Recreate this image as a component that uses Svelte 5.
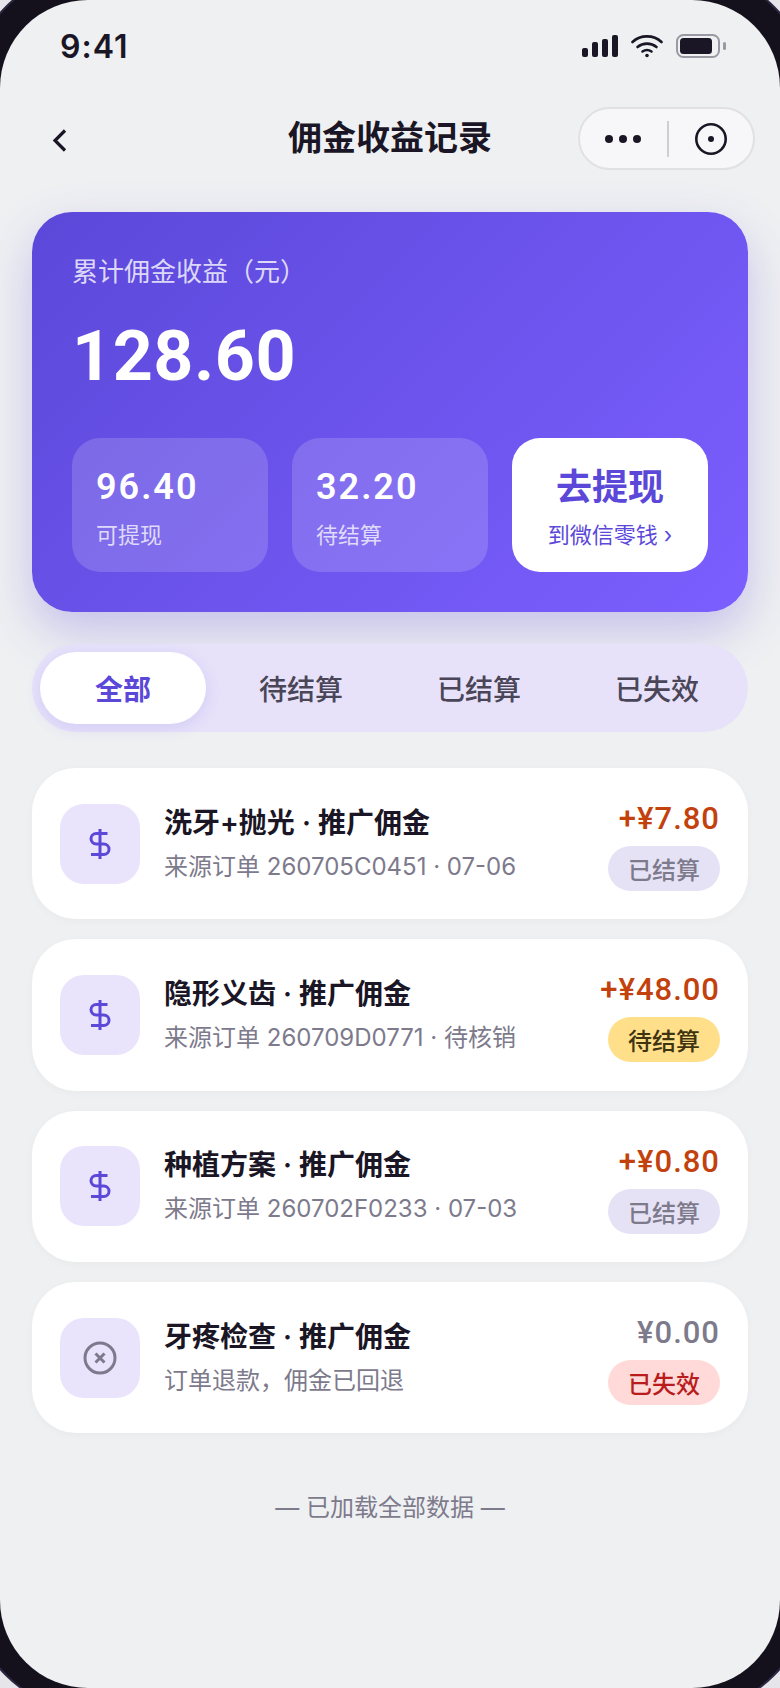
<script>
  const rows = [
    { title: '洗牙+抛光 · 推广佣金', sub: '来源订单 260705C0451 · 07-06', amount: '+¥7.80', status: '已结算', tone: 'done', icon: 'dollar' },
    { title: '隐形义齿 · 推广佣金', sub: '来源订单 260709D0771 · 待核销', amount: '+¥48.00', status: '待结算', tone: 'wait', icon: 'dollar' },
    { title: '种植方案 · 推广佣金', sub: '来源订单 260702F0233 · 07-03', amount: '+¥0.80', status: '已结算', tone: 'done', icon: 'dollar' },
    { title: '牙疼检查 · 推广佣金', sub: '订单退款，佣金已回退', amount: '¥0.00', status: '已失效', tone: 'lost', icon: 'x' }
  ];
  const tabs = ['全部', '待结算', '已结算', '已失效'];
</script>

<div class="frame">
  <div class="bezel"></div>
  <div class="screen">
    <div class="statusbar">
      <span class="time">9:41</span>
      <div class="status-icons">
        <svg width="36" height="22" viewBox="0 0 36 22">
          <rect x="0" y="13" width="6" height="9" rx="2" fill="#1a1625"/>
          <rect x="10" y="7" width="6" height="15" rx="2" fill="#1a1625"/>
          <rect x="20" y="4" width="6" height="18" rx="2" fill="#1a1625"/>
          <rect x="30" y="0" width="6" height="22" rx="2" fill="#1a1625"/>
        </svg>
        <svg width="32" height="24" viewBox="0 0 32 24" fill="none" stroke="#1a1625" stroke-width="2.6" stroke-linecap="round">
          <path d="M1.500 8C9.500 0.500 22.500 0.500 30.500 8"/>
          <path d="M6.500 13C12 8.500 20 8.500 25.500 13"/>
          <path d="M11.500 17.500C14.500 15.500 17.500 15.500 20.500 17.500"/>
          <circle cx="16" cy="21.500" r="1.800" fill="#1a1625" stroke="none"/>
        </svg>
        <svg width="50" height="24" viewBox="0 0 50 24">
          <rect x="1" y="1" width="42" height="22" rx="6.500" fill="none" stroke="#9a99a3" stroke-width="2"/>
          <rect x="4" y="4" width="32" height="16" rx="3.500" fill="#1a1625"/>
          <rect x="47" y="8" width="3" height="8" rx="1.500" fill="#9a99a3"/>
        </svg>
      </div>
    </div>

    <div class="navbar">
      <svg class="back" width="15" height="23" viewBox="0 0 15 23" fill="none" stroke="#1a1625" stroke-width="3.200">
        <path d="M13 1.500L3 11.500L13 21.500"/>
      </svg>
      <h1>佣金收益记录</h1>
      <div class="capsule">
        <div class="dots"><i></i><i></i><i></i></div>
        <span class="cap-line"></span>
        <svg width="32" height="32" viewBox="0 0 32 32">
          <circle cx="16" cy="16" r="14.700" fill="none" stroke="#1a1625" stroke-width="2.600"/>
          <circle cx="16" cy="16" r="3" fill="#1a1625"/>
        </svg>
      </div>
    </div>

    <section class="hero">
      <div class="hero-label">累计佣金收益（元）</div>
      <div class="hero-total">128.60</div>
      <div class="hero-cells">
        <div class="cell">
          <strong>96.40</strong>
          <span>可提现</span>
        </div>
        <div class="cell">
          <strong>32.20</strong>
          <span>待结算</span>
        </div>
        <div class="withdraw">
          <strong>去提现</strong>
          <span>到微信零钱 ›</span>
        </div>
      </div>
    </section>

    <div class="tabs">
      {#each tabs as tab, i}
        <div class="tab" class:active={i === 0}>{tab}</div>
      {/each}
    </div>

    <div class="list">
      {#each rows as row}
        <div class="row">
          <div class="row-icon">
            {#if row.icon === 'dollar'}
              <svg width="36" height="36" viewBox="0 0 24 24" fill="none" stroke="#5b48d9" stroke-width="2">
                <path d="M12 2V22"/>
                <path d="M17 5H9.500a3.500 3.500 0 0 0 0 7h5a3.500 3.500 0 0 1 0 7H6"/>
              </svg>
            {:else}
              <svg width="36" height="36" viewBox="0 0 24 24" fill="none" stroke="#7d7a8c" stroke-width="2">
                <circle cx="12" cy="12" r="10"/>
                <path d="M15 9L9 15M9 9L15 15"/>
              </svg>
            {/if}
          </div>
          <div class="row-main">
            <div class="row-title">{row.title}</div>
            <div class="row-sub">{row.sub}</div>
          </div>
          <div class="row-side">
            <div class="amount" class:void={row.tone === 'lost'}>{row.amount}</div>
            <div class="badge {row.tone}">{row.status}</div>
          </div>
        </div>
      {/each}
    </div>

    <div class="foot">— 已加载全部数据 —</div>
  </div>
</div>

<style>
  :global(body) {
    margin: 0;
    background: #e6e6ea;
  }

  .frame {
    position: relative;
    width: 780px;
    height: 1688px;
    overflow: hidden;
    font-family: Inter, "Noto Sans CJK SC", sans-serif;
    color: #1a1625;
  }

  .bezel {
    position: absolute;
    inset: -30px -30px -24px;
    background: #14111d;
    border: 2px solid #2c2843;
    border-radius: 122px;
  }

  .screen {
    position: relative;
    height: 1688px;
    box-sizing: border-box;
    padding: 0 32px;
    background: #eff0f2;
    border-radius: 88px;
    overflow: hidden;
  }

  .statusbar {
    height: 92px;
    padding: 0 22px 0 28px;
    display: flex;
    align-items: center;
    justify-content: space-between;
  }

  .time {
    font-size: 32px;
    font-weight: 600;
    letter-spacing: 1px;
  }

  .status-icons {
    display: flex;
    align-items: center;
    gap: 13px;
  }

  .navbar {
    height: 92px;
    display: flex;
    align-items: center;
    justify-content: center;
    position: relative;
  }

  .back {
    position: absolute;
    left: 20px;
    top: 37px;
  }

  h1 {
    margin: 0;
    font-size: 34px;
    font-weight: 700;
    line-height: 48px;
  }

  .capsule {
    position: absolute;
    right: -7px;
    top: 15px;
    width: 177px;
    height: 63px;
    box-sizing: border-box;
    display: flex;
    align-items: center;
    background: #f7f7f9;
    border: 2px solid #e1e1e4;
    border-radius: 32px;
    padding-left: 25px;
  }

  .dots {
    display: flex;
    gap: 6px;
  }

  .dots i {
    width: 8px;
    height: 8px;
    background: #1a1625;
    border-radius: 50%;
  }

  .cap-line {
    width: 2px;
    height: 36px;
    margin: 0 26px;
    background: #cfcfd3;
  }

  .hero {
    margin-top: 28px;
    height: 400px;
    box-sizing: border-box;
    padding: 42px 40px 40px;
    border-radius: 40px;
    background: linear-gradient(135deg, #5b48d9 0%, #7c5fff 100%);
    box-shadow: 0 20px 48px rgba(91, 72, 217, 0.28);
    color: #fff;
  }

  .hero-label {
    font-size: 26px;
    line-height: 36px;
    color: rgba(255, 255, 255, 0.8);
  }

  .hero-total {
    margin-top: 24px;
    font-family: Roboto, sans-serif;
    font-size: 70px;
    font-weight: 700;
    line-height: 84px;
    letter-spacing: 0.5px;
  }

  .hero-cells {
    margin-top: 40px;
    display: grid;
    grid-template-columns: repeat(3, 1fr);
    gap: 24px;
  }

  .cell,
  .withdraw {
    height: 134px;
    box-sizing: border-box;
    border-radius: 28px;
    display: flex;
    flex-direction: column;
  }

  .cell {
    padding: 26px 24px;
    background: rgba(255, 255, 255, 0.16);
  }

  .cell strong {
    font-family: Roboto, sans-serif;
    font-size: 36px;
    font-weight: 600;
    line-height: 46px;
    letter-spacing: 2px;
  }

  .cell span {
    margin-top: 10px;
    font-size: 22px;
    line-height: 30px;
    color: rgba(255, 255, 255, 0.75);
  }

  .withdraw {
    align-items: center;
    justify-content: center;
    padding-top: 3px;
    background: #fff;
    color: #5b48d9;
  }

  .withdraw strong {
    font-size: 36px;
    font-weight: 700;
    line-height: 48px;
  }

  .withdraw span {
    margin-top: 9px;
    font-size: 22px;
    line-height: 30px;
  }

  .tabs {
    margin-top: 32px;
    height: 88px;
    box-sizing: border-box;
    padding: 8px;
    display: grid;
    grid-template-columns: repeat(4, 1fr);
    gap: 12px;
    background: #e7e2fa;
    border-radius: 44px;
  }

  .tab {
    display: flex;
    align-items: center;
    justify-content: center;
    font-size: 28px;
    font-weight: 500;
    color: #4a4658;
    border-radius: 36px;
  }

  .tab.active {
    background: #fff;
    color: #5b48d9;
    font-weight: 700;
    box-shadow: 0 4px 16px rgba(91, 72, 217, 0.14);
  }

  .list {
    margin-top: 36px;
    display: flex;
    flex-direction: column;
    gap: 20px;
  }

  .row {
    height: 151.33px;
    box-sizing: border-box;
    padding: 0 28px;
    display: flex;
    align-items: center;
    gap: 24px;
    background: #fff;
    border-radius: 44px;
    box-shadow: 0 2px 8px rgba(26, 22, 37, 0.03);
  }

  .row-icon {
    flex: none;
    width: 80px;
    height: 80px;
    display: flex;
    align-items: center;
    justify-content: center;
    background: #e9e4fc;
    border-radius: 24px;
  }

  .row-main {
    flex: 1;
    min-width: 0;
  }

  .row-title {
    font-size: 28px;
    font-weight: 600;
    line-height: 38px;
    white-space: nowrap;
  }

  .row-sub {
    margin-top: 8px;
    font-size: 24px;
    line-height: 34px;
    color: #7d7a8c;
    white-space: nowrap;
  }

  .row-side {
    flex: none;
    padding-top: 3px;
    display: flex;
    flex-direction: column;
    align-items: flex-end;
    gap: 7px;
  }

  .amount {
    font-family: Roboto, "Noto Sans CJK SC", sans-serif;
    font-size: 31px;
    font-weight: 500;
    line-height: 40px;
    letter-spacing: 1px;
    color: #c2410c;
  }

  .amount.void {
    color: #7d7a8c;
  }

  .badge {
    width: 112px;
    height: 45px;
    display: flex;
    align-items: center;
    justify-content: center;
    border-radius: 23px;
    font-size: 24px;
    font-weight: 500;
  }

  .badge.done {
    background: #e6e2f5;
    color: #7d7a8c;
  }

  .badge.wait {
    background: #ffdf8a;
    color: #3f3410;
  }

  .badge.lost {
    background: #ffdad8;
    color: #b91c1c;
  }

  .foot {
    margin-top: 58px;
    text-align: center;
    font-size: 24px;
    line-height: 34px;
    color: #7d7a8c;
  }
</style>
